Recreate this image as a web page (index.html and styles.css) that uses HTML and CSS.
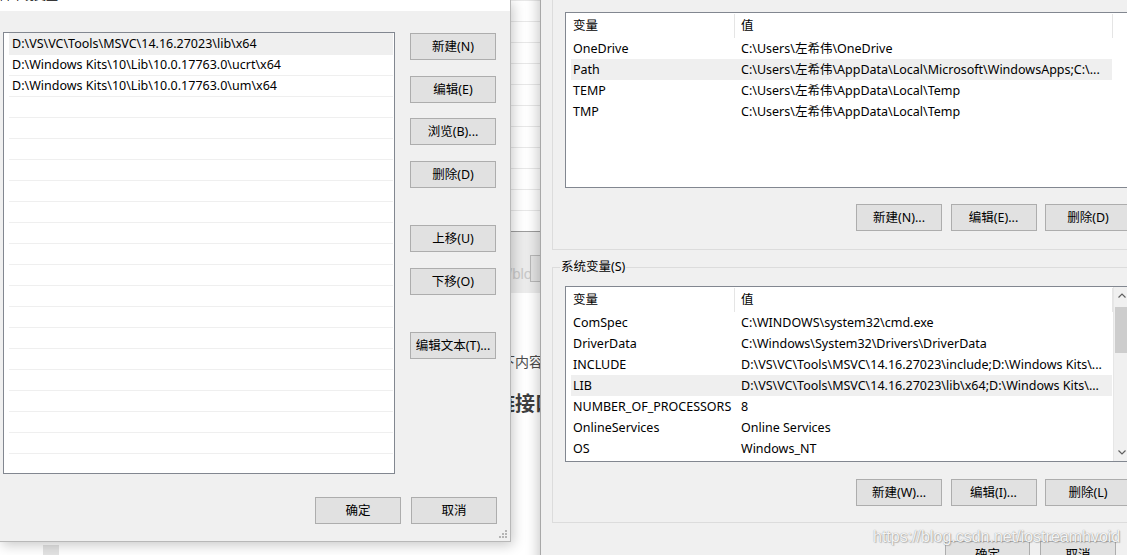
FILE: index.html
```html
<!DOCTYPE html>
<html lang="zh-CN">
<head>
<meta charset="utf-8">
<title>环境变量</title>
<link rel="stylesheet" href="styles.css">
</head>
<body>
<div class="desktop">

  <div class="page">
    <div class="grid"></div>
    <div class="toolbar">
      <span class="tb-text">/blog</span>
      <span class="tb-btn"></span>
    </div>
    <div class="article">
      <p class="para">以下内容</p>
      <h2 class="heading">链接口</h2>
    </div>
    <div class="foot-box"></div>
  </div>

  <section class="dlg-left">
    <div class="titlebar"><span class="title">编辑环境变量</span></div>
    <div class="dlg-body">
      <div class="listbox">
        <div class="lb-row sel">D:\VS\VC\Tools\MSVC\14.16.27023\lib\x64</div>
        <div class="lb-row">D:\Windows Kits\10\Lib\10.0.17763.0\ucrt\x64</div>
        <div class="lb-row">D:\Windows Kits\10\Lib\10.0.17763.0\um\x64</div>
        <div class="lb-row"></div><div class="lb-row"></div><div class="lb-row"></div>
        <div class="lb-row"></div><div class="lb-row"></div><div class="lb-row"></div>
        <div class="lb-row"></div><div class="lb-row"></div><div class="lb-row"></div>
        <div class="lb-row"></div><div class="lb-row"></div><div class="lb-row"></div>
        <div class="lb-row"></div><div class="lb-row"></div><div class="lb-row"></div>
        <div class="lb-row"></div><div class="lb-row"></div><div class="lb-row"></div>
      </div>
      <div class="btn-col">
        <button class="btn">新建(N)</button>
        <button class="btn">编辑(E)</button>
        <button class="btn">浏览(B)...</button>
        <button class="btn">删除(D)</button>
        <button class="btn spaced">上移(U)</button>
        <button class="btn">下移(O)</button>
        <button class="btn spaced">编辑文本(T)...</button>
      </div>
    </div>
    <div class="dlg-foot">
      <button class="btn">确定</button>
      <button class="btn">取消</button>
    </div>
    <svg class="grip" width="8" height="8" viewBox="0 0 8 8">
      <rect x="6" y="0" width="2" height="2" fill="#b4b4b4"/>
      <rect x="3" y="3" width="2" height="2" fill="#b4b4b4"/>
      <rect x="6" y="3" width="2" height="2" fill="#b4b4b4"/>
      <rect x="0" y="6" width="2" height="2" fill="#b4b4b4"/>
      <rect x="3" y="6" width="2" height="2" fill="#b4b4b4"/>
      <rect x="6" y="6" width="2" height="2" fill="#b4b4b4"/>
    </svg>
  </section>

  <section class="dlg-right">
    <div class="group user-group">
      <div class="lv">
        <div class="lv-head"><div class="hc c1">变量</div><div class="hc c2">值</div></div>
        <div class="lv-row"><div class="c1">OneDrive</div><div class="c2">C:\Users\左希伟\OneDrive</div></div>
        <div class="lv-row sel"><div class="c1">Path</div><div class="c2">C:\Users\左希伟\AppData\Local\Microsoft\WindowsApps;C:\...</div></div>
        <div class="lv-row"><div class="c1">TEMP</div><div class="c2">C:\Users\左希伟\AppData\Local\Temp</div></div>
        <div class="lv-row"><div class="c1">TMP</div><div class="c2">C:\Users\左希伟\AppData\Local\Temp</div></div>
      </div>
      <div class="btn-row">
        <button class="btn">新建(N)...</button>
        <button class="btn">编辑(E)...</button>
        <button class="btn">删除(D)</button>
      </div>
    </div>

    <div class="group sys-group">
      <span class="legend">系统变量(S)</span>
      <div class="lv lv-sys">
        <div class="lv-main">
          <div class="lv-head"><div class="hc c1">变量</div><div class="hc c2">值</div></div>
          <div class="lv-row"><div class="c1">ComSpec</div><div class="c2">C:\WINDOWS\system32\cmd.exe</div></div>
          <div class="lv-row"><div class="c1">DriverData</div><div class="c2">C:\Windows\System32\Drivers\DriverData</div></div>
          <div class="lv-row"><div class="c1">INCLUDE</div><div class="c2">D:\VS\VC\Tools\MSVC\14.16.27023\include;D:\Windows Kits\...</div></div>
          <div class="lv-row sel"><div class="c1">LIB</div><div class="c2">D:\VS\VC\Tools\MSVC\14.16.27023\lib\x64;D:\Windows Kits\...</div></div>
          <div class="lv-row"><div class="c1">NUMBER_OF_PROCESSORS</div><div class="c2">8</div></div>
          <div class="lv-row"><div class="c1">OnlineServices</div><div class="c2">Online Services</div></div>
          <div class="lv-row"><div class="c1">OS</div><div class="c2">Windows_NT</div></div>
        </div>
        <div class="scrollbar">
          <div class="arrow">
            <svg width="8" height="5" viewBox="0 0 8 5"><polyline points="0.5,4.5 4,1 7.5,4.5" fill="none" stroke="#606060" stroke-width="1.2"/></svg>
          </div>
          <div class="thumb"></div>
          <div class="track"></div>
          <div class="arrow">
            <svg width="8" height="5" viewBox="0 0 8 5"><polyline points="0.5,0.5 4,4 7.5,0.5" fill="none" stroke="#606060" stroke-width="1.2"/></svg>
          </div>
        </div>
      </div>
      <div class="btn-row">
        <button class="btn">新建(W)...</button>
        <button class="btn">编辑(I)...</button>
        <button class="btn">删除(L)</button>
      </div>
    </div>

    <div class="right-foot">
      <button class="btn">确定</button>
      <button class="btn">取消</button>
    </div>
  </section>

  <div class="watermark">https://blog.csdn.net/iostreamhvoid</div>
</div>
</body>
</html>
```

FILE: styles.css
```css
* { box-sizing: border-box; }

html, body {
  margin: 0;
  padding: 0;
}

body {
  width: 1127px;
  height: 555px;
  overflow: hidden;
  background: #fff;
  font-family: "Noto Sans", "Noto Sans CJK SC", sans-serif;
  font-size: 12.5px;
  color: #000;
}

.desktop {
  position: relative;
  width: 1127px;
  height: 555px;
  overflow: hidden;
}

/* ---------- background web page ---------- */
.page {
  position: absolute;
  left: 0;
  top: 0;
  width: 1127px;
  height: 555px;
  background: #fff;
}

.grid {
  height: 231px;
  background: repeating-linear-gradient(to bottom, #fff 0 20px, #e8e8e8 20px 21px);
  background-position: 0 1px;
}

.toolbar {
  height: 62px;
  border-top: 1px solid #9c9c9c;
  background: #ececec;
  display: flex;
  align-items: flex-start;
  padding: 23px 0 0 508px;
}

.tb-text {
  display: inline-block;
  width: 22px;
  overflow: hidden;
  white-space: nowrap;
  margin-top: 10px;
  font-family: "Liberation Sans", sans-serif;
  font-size: 15px;
  line-height: 18px;
  color: #c9c9c9;
}

.tb-btn {
  width: 26px;
  height: 27px;
  border: 1px solid #b9b9b9;
  background: #e4e4e4;
}

.article {
  height: 252px;
  padding: 59px 0 0 0;
}

.para {
  margin: 0;
  padding-left: 487px;
  font-size: 14px;
  line-height: 20px;
  color: #4d4d4d;
  white-space: nowrap;
}

.heading {
  margin: 18px 0 0;
  padding-left: 495px;
  font-size: 20px;
  line-height: 28px;
  font-weight: bold;
  color: #3f3f3f;
  white-space: nowrap;
}

.foot-box {
  margin-left: 43px;
  width: 16px;
  height: 10px;
  background: #e3e3e3;
}

/* ---------- buttons ---------- */
.btn {
  width: 86px;
  height: 27px;
  margin: 0;
  padding: 0;
  border: 1px solid #adadad;
  background: #e1e1e1;
  font: inherit;
  line-height: 25px;
  color: #000;
  text-align: center;
  white-space: nowrap;
}

/* ---------- left dialog ---------- */
.dlg-left {
  position: absolute;
  left: 0;
  top: 0;
  width: 511px;
  height: 542px;
  background: #f0f0f0;
  border-right: 1px solid #b8b8b8;
  border-bottom: 1px solid #b8b8b8;
  box-shadow: 2px 3px 12px rgba(0, 0, 0, 0.22);
  z-index: 2;
}

.titlebar {
  height: 11px;
  background: #fff;
  overflow: hidden;
}

.title {
  display: block;
  margin: -12px 0 0 -14px;
  font-size: 12px;
  line-height: 16px;
  color: #000;
}

.dlg-body {
  display: flex;
  align-items: flex-start;
  padding: 21px 0 0 3px;
}

.listbox {
  width: 392px;
  height: 442px;
  border: 1px solid #828790;
  background: #fff;
  padding: 0 1px 0 5px;
  overflow: hidden;
}

.lb-row {
  height: 21px;
  border-top: 1px solid #efefef;
  padding-left: 3px;
  line-height: 20px;
  white-space: nowrap;
}

.lb-row:first-child {
  border-top: 0;
  line-height: 21px;
}

.lb-row.sel {
  background: #efefef;
}

.btn-col {
  display: flex;
  flex-direction: column;
  gap: 15.5px;
  margin-left: 15px;
  padding-top: 1px;
}

.btn-col .spaced {
  margin-top: 22px;
}

.dlg-foot {
  display: flex;
  justify-content: flex-end;
  gap: 10px;
  padding: 23px 13px 0 0;
}

.grip {
  position: absolute;
  right: 3px;
  bottom: 3px;
}

/* ---------- right dialog ---------- */
.dlg-right {
  position: absolute;
  left: 540px;
  top: -20px;
  width: 620px;
  height: 600px;
  background: #f0f0f0;
  border-left: 1px solid #a8a8a8;
  box-shadow: -2px 2px 12px rgba(0, 0, 0, 0.22);
  padding: 10px 0 0 11px;
  z-index: 1;
}

.group {
  position: relative;
  width: 592px;
  border: 1px solid #dcdcdc;
  padding: 0 12px;
}

.user-group {
  padding-top: 21px;
  padding-bottom: 18px;
}

.sys-group {
  margin-top: 17px;
  padding-top: 18px;
  padding-bottom: 16px;
}

.legend {
  position: absolute;
  left: 7px;
  top: -9px;
  padding: 0 1px;
  background: #f0f0f0;
  line-height: 16px;
  white-space: nowrap;
}

.lv {
  width: 566px;
  border: 1px solid #828790;
  background: #fff;
  overflow: hidden;
  padding-left: 5px;
}

.user-group .lv {
  height: 176px;
}

.lv-sys {
  height: 176px;
  display: flex;
  padding-left: 0;
}

.lv-main {
  flex: 1;
  padding-left: 5px;
  overflow: hidden;
}

.lv-head {
  display: flex;
  padding-top: 1px;
  height: 25px;
}

.lv-head .hc {
  height: 24px;
  line-height: 23px;
  border-right: 1px solid #e5e5e5;
}

.c1 {
  width: 164px;
  flex: none;
  padding-left: 2px;
  white-space: nowrap;
  overflow: hidden;
}

.c2 {
  width: 378px;
  flex: none;
  padding-left: 6px;
  white-space: nowrap;
  overflow: hidden;
}

.lv-row {
  display: flex;
  width: 541px;
  height: 21px;
  line-height: 21px;
}

.lv-row.sel {
  background: #efefef;
}

.scrollbar {
  width: 17px;
  flex: none;
  display: flex;
  flex-direction: column;
  background: #f0f0f0;
  border-left: 1px solid #e6e6e6;
}

.arrow {
  height: 17px;
  display: flex;
  align-items: center;
  justify-content: center;
}

.thumb {
  margin: 3px 1px 0 1px;
  height: 46px;
  background: #cdcdcd;
}

.track {
  flex: 1;
}

.btn-row {
  display: flex;
  justify-content: flex-end;
  gap: 8.5px;
  margin-top: 16px;
}

.sys-group .btn-row {
  margin-top: 17px;
}

.right-foot {
  width: 592px;
  display: flex;
  justify-content: flex-end;
  gap: 10px;
  padding: 18px 28px 0 0;
}

.right-foot .btn {
  width: 85px;
}

.right-foot .btn + .btn {
  width: 76px;
}

/* ---------- watermark ---------- */
.watermark {
  position: absolute;
  left: 873px;
  top: 527px;
  z-index: 5;
  font-family: "Liberation Sans", sans-serif;
  font-size: 16px;
  line-height: 20px;
  color: rgba(255, 255, 255, 0.92);
  text-shadow: 0 0 1px rgba(80, 80, 80, 0.65), 1px 1px 1px rgba(120, 120, 120, 0.4);
  white-space: nowrap;
}
```
